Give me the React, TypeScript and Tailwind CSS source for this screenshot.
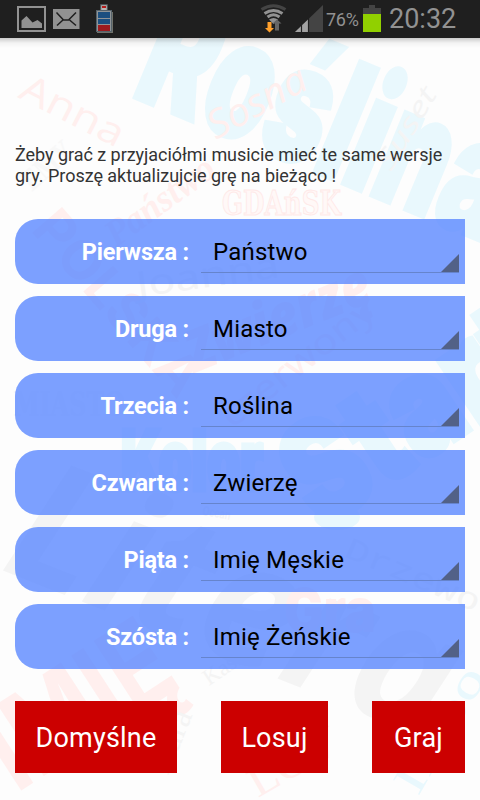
interface Word {
  text: string;
  x: number;
  y: number;
  rotate: number;
  size: number;
  length: number;
  className: string;
}

const CYAN = "fill-[#e9f8fd]";
const CYAN_HEAVY = "fill-[#e9f8fd] stroke-[#e9f8fd] stroke-[5px] font-['Inter'] font-black";
const PINK = "fill-[#ffefee]";
const GRAY = "fill-[#f4f4f4]";

const words: Word[] = [
  { text: "Roślina", x: 130, y: 95, rotate: 22.5, size: 163, length: 385, className: CYAN_HEAVY },
  { text: "Start", x: 322, y: 530, rotate: -34, size: 138, length: 280, className: CYAN_HEAVY },
  { text: "Kolor", x: 121, y: 490, rotate: 0, size: 83, length: 142, className: CYAN_HEAVY },
  { text: "Litera", x: -1, y: 569, rotate: 21.5, size: 172, length: 465, className: `${GRAY} font-['Open_Sans'] font-bold italic` },
  { text: "IMIĘ", x: 16, y: 794, rotate: -33, size: 118, length: 200, className: `${PINK} font-['Inter'] font-bold` },
  { text: "Anna", x: 17, y: 97, rotate: 27, size: 38, length: 112, className: `${PINK} font-['Open_Sans']` },
  { text: "Sosna", x: 216, y: 140, rotate: -29, size: 39, length: 108, className: `${PINK} font-['Open_Sans'] italic` },
  { text: "Suset", x: 391, y: 172, rotate: -59, size: 27, length: 91, className: `${GRAY} font-['Open_Sans'] italic` },
  { text: "EMY", x: 32, y: 192, rotate: -41, size: 31, length: 58, className: "fill-[#f8f8f8] font-['Liberation_Serif'] font-bold" },
  { text: "Państwo", x: 116, y: 248, rotate: -36, size: 38, length: 126, className: `${PINK} font-['Liberation_Serif'] font-bold italic` },
  { text: "GDAńSK", x: 222, y: 215, rotate: 0, size: 33, length: 119, className: "fill-[#fff8f7] stroke-[#ffe9e8] stroke-1 font-['DejaVu_Serif'] font-bold" },
  { text: "POLSKA", x: 30, y: 230, rotate: 49, size: 54, length: 225, className: `${PINK} font-['Inter'] font-bold` },
  { text: "Joanna", x: 138, y: 297, rotate: -8, size: 35, length: 144, className: `${GRAY} font-['Noto_Sans']` },
  { text: "Zwierzę", x: 195, y: 373, rotate: -22, size: 58, length: 195, className: `${PINK} font-['Open_Sans'] font-extrabold italic` },
  { text: "czerwony", x: 232, y: 429, rotate: -38, size: 35, length: 185, className: `${PINK} font-['Noto_Sans']` },
  { text: "MIASTO", x: 13, y: 416, rotate: 0, size: 33, length: 112, className: "fill-[#f8f8f8] font-['DejaVu_Serif'] font-bold" },
  { text: "Ocean", x: 202, y: 515, rotate: 10, size: 13, length: 28, className: `${GRAY} font-['Inter'] font-bold` },
  { text: "Drzewo", x: 343, y: 556, rotate: 23, size: 31, length: 144, className: `${GRAY} font-['Liberation_Mono']` },
  { text: "Gra", x: 284, y: 632, rotate: 0, size: 61, length: 92, className: `${PINK} font-['Inter'] font-black` },
  { text: "Kasia", x: 209, y: 686, rotate: -34, size: 23, length: 52, className: `${GRAY} font-['Liberation_Serif']` },
  { text: "Kura", x: 168, y: 776, rotate: -68, size: 34, length: 66, className: `${GRAY} font-['Liberation_Serif']` },
  { text: "LOV", x: 258, y: 798, rotate: -30, size: 42, length: 98, className: `${PINK} font-['Liberation_Serif']` },
  { text: "Imbo", x: 418, y: 797, rotate: -60, size: 46, length: 139, className: `${CYAN} font-['Liberation_Serif']` },
];

const rows = [
  { label: "Pierwsza :", value: "Państwo" },
  { label: "Druga :", value: "Miasto" },
  { label: "Trzecia :", value: "Roślina" },
  { label: "Czwarta :", value: "Zwierzę" },
  { label: "Piąta :", value: "Imię Męskie" },
  { label: "Szósta :", value: "Imię Żeńskie" },
];

function WordCloud() {
  return (
    <svg
      className="absolute inset-0"
      width="480"
      height="800"
      viewBox="0 0 480 800"
      aria-hidden="true"
    >
      {words.map((word) => (
        <text
          key={word.text}
          transform={`translate(${word.x} ${word.y}) rotate(${word.rotate})`}
          fontSize={word.size}
          textLength={word.length}
          lengthAdjust="spacingAndGlyphs"
          className={word.className}
        >
          {word.text}
        </text>
      ))}
      <ellipse cx="337" cy="517" rx="23" ry="13" className="fill-[#e9f8fd]" />
    </svg>
  );
}

function StatusBar() {
  return (
    <header className="relative flex h-[38px] items-center bg-[#1f1f1f] text-[#929292]">
      <svg className="h-[38px] w-[120px]" viewBox="0 0 120 38">
        <rect x="18" y="7" width="27" height="24" fill="none" stroke="#929292" strokeWidth="2" />
        <path d="M21.5 28V20.500L26.5 16l6 6.5 5-2.5 4.500 3.500V28Z" fill="#929292" />
        <rect x="53" y="9" width="26.5" height="20" fill="#929292" />
        <path
          d="M56.5 12.5 63.5 20h5L76 12.5M57 25.5l6.5-6M76 25.5l-7-6"
          fill="none"
          stroke="#1f1f1f"
          strokeWidth="1.5"
        />
        <rect x="100.7" y="4.7" width="6.6" height="6" fill="#b5b5b5" stroke="#4e565b" strokeWidth="1" />
        <rect x="102" y="6" width="4" height="2" fill="#b51b1b" />
        <rect x="97" y="12" width="16" height="21" fill="#70726b" />
        <rect x="96" y="10" width="16" height="22" fill="#56636b" />
        <rect x="97" y="11" width="14" height="20" fill="#8f9497" />
        <rect x="98" y="12" width="12" height="6" fill="#1b4f80" />
        <rect x="98" y="19" width="12" height="5" fill="#1b4f80" />
        <rect x="98" y="25" width="12" height="6" fill="#9c1b1e" />
      </svg>
      <svg className="ml-[138px] h-[38px] w-[67px]" viewBox="0 0 67 38">
        <g fill="none" strokeWidth="3">
          <path d="M3.5 9.5Q15.500 2 27.500 9.5" stroke="#444" />
          <path d="M6.500 13.500Q15.500 7.500 24.500 13.500" stroke="#929292" />
          <path d="M9.500 17Q15.500 12.500 21.500 17" stroke="#929292" />
        </g>
        <path d="m11 19.500q4.500-3 9 0L15.500 24Z" fill="#929292" />
        <path d="M9.500 22h4v6h2.500l-4.500 4.500L7 28h2.500Z" fill="#ffa02c" />
        <path d="M17 30.500h4v-7h2.500L19 19.500 14.500 23.500H17Z" fill="#666" />
        <path d="M37 32 65 5v27Z" fill="#444" />
        <path d="M37 32 50 19.500V32Z" fill="#a2a2a2" />
        <path d="M43.500 25v7M50.500 18v14" stroke="#1f1f1f" strokeWidth="1.200" />
      </svg>
      <span className="ml-px w-[34px] whitespace-nowrap pt-px font-['Roboto'] text-[18px] tracking-[-0.3px]">
        76%
      </span>
      <svg className="ml-[3px] h-[38px] w-[18px]" viewBox="0 0 18 38">
        <path d="M0 8h6V5h6v3h6v6H0Z" fill="#444" />
        <path d="M0 14h18v18H0Z" fill="#91d000" />
      </svg>
      <span className="ml-[8px] whitespace-nowrap font-['Roboto'] text-[27px] leading-[38px]">
        20:32
      </span>
    </header>
  );
}

function CategoryRow({ label, value }: { label: string; value: string }) {
  return (
    <div className="flex h-[65px] rounded-l-[23px] bg-[#5b88ff]/80 pr-[6px]">
      <span className="w-[174px] whitespace-pre text-right font-['Roboto'] text-[23.5px] font-bold leading-[67px] tracking-[-0.2px] text-white">
        {label}
      </span>
      <button
        type="button"
        className="ml-[12px] flex h-[54px] flex-1 items-end justify-between border-b border-[#6684cc] pl-[12px]"
      >
        <span className="whitespace-nowrap font-['Roboto'] text-[24px] leading-[40px] tracking-[0.2px] text-black">
          {value}
        </span>
        <svg className="h-[18px] w-[18px]" viewBox="0 0 18 18">
          <path d="M18 0V18H0Z" fill="#526187" />
        </svg>
      </button>
    </div>
  );
}

function ActionButton({ label, className }: { label: string; className: string }) {
  return (
    <button
      type="button"
      className={`h-[72px] whitespace-nowrap bg-[#cc0000] pt-0.5 font-['Roboto'] text-[27px] tracking-[0.2px] text-white ${className}`}
    >
      {label}
    </button>
  );
}

export default function App() {
  return (
    <div className="relative h-[800px] w-[480px] overflow-hidden bg-[#fdfdfd] font-['Roboto',sans-serif]">
      <WordCloud />
      <StatusBar />
      <div className="relative h-[10px] bg-gradient-to-b from-black/20 via-black/4 to-transparent" />
      <main className="relative px-[15px] pt-[96px]">
        <p className="h-[42px] whitespace-nowrap text-[18px] leading-[21px] tracking-[-0.04px] text-[#333]">
          Żeby grać z przyjaciółmi musicie mieć te same wersje
          <br />
          gry. Proszę aktualizujcie grę na bieżąco !
        </p>
        <div className="mt-[33px] flex flex-col gap-3">
          {rows.map((row) => (
            <CategoryRow key={row.label} label={row.label} value={row.value} />
          ))}
        </div>
        <div className="mt-8 flex justify-between">
          <ActionButton label="Domyślne" className="w-[162px]" />
          <ActionButton label="Losuj" className="w-[107px]" />
          <ActionButton label="Graj" className="w-[93px]" />
        </div>
      </main>
    </div>
  );
}
